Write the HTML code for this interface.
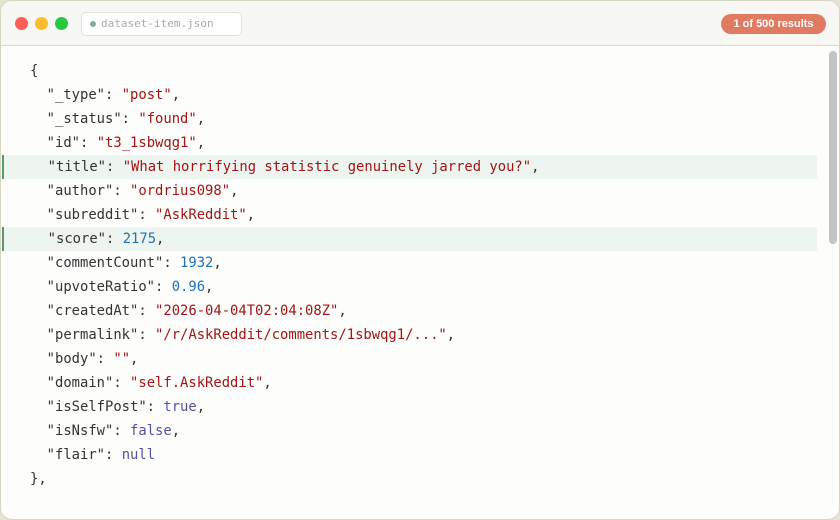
<!DOCTYPE html>
<html><head><style>
html,body{margin:0;padding:0;width:840px;height:520px;overflow:hidden;background:#e4e4d4;}
.win{position:absolute;left:0;top:0;width:838px;height:518px;border:1px solid #d6d6c2;border-radius:12px;background:#fdfdfc;overflow:hidden;}
.hdr{position:absolute;left:0;top:0;right:0;height:44px;background:#f7f7f3;border-bottom:1px solid #dcdccc;}
.dot{position:absolute;top:16px;width:13px;height:13px;border-radius:50%;}
.url{position:absolute;left:80px;top:11px;width:159px;height:22px;border:1px solid #e2e2d8;border-radius:5px;background:#fff;font:11px "DejaVu Sans Mono",monospace;color:#a8a8b0;line-height:22px;}
.url i{position:absolute;left:8px;top:8px;width:6px;height:6px;border-radius:50%;background:#7fae98;}
.badge{position:absolute;left:720px;top:13px;width:105px;height:20px;border-radius:10px;background:#e07a60;color:#fff;font:bold 11px "Liberation Sans",sans-serif;text-align:center;line-height:20px;}
.sb{position:absolute;left:828px;top:50px;width:8px;height:193px;border-radius:4px;background:#c4c4c4;}
.code{position:absolute;left:0;top:58px;width:816px;font:13.85px "DejaVu Sans Mono",monospace;color:#333;}
.l{height:24px;line-height:24px;padding-left:29px;white-space:pre;}
.h{background:#eef4ef;border-left:2px solid #5c9a6a;padding-left:27px;margin-left:1px;}
.s{color:#a31515}.n{color:#1f74b8}.b{color:#5252a0}
</style></head><body>
<div class="win">
<div class="hdr">
<div class="dot" style="left:14px;background:#fe5f57"></div>
<div class="dot" style="left:34px;background:#febc2e"></div>
<div class="dot" style="left:54px;background:#28c840"></div>
<div class="url"><i></i><span style="position:absolute;left:19px">dataset-item.json</span></div>
<div class="badge">1 of 500 results</div>
</div>
<div class="sb"></div>
<div class="code">
<div class="l">{</div>
<div class="l">  "_type": <span class="s">"post"</span>,</div>
<div class="l">  "_status": <span class="s">"found"</span>,</div>
<div class="l">  "id": <span class="s">"t3_1sbwqg1"</span>,</div>
<div class="l h">  "title": <span class="s">"What horrifying statistic genuinely jarred you?"</span>,</div>
<div class="l">  "author": <span class="s">"ordrius098"</span>,</div>
<div class="l">  "subreddit": <span class="s">"AskReddit"</span>,</div>
<div class="l h">  "score": <span class="n">2175</span>,</div>
<div class="l">  "commentCount": <span class="n">1932</span>,</div>
<div class="l">  "upvoteRatio": <span class="n">0.96</span>,</div>
<div class="l">  "createdAt": <span class="s">"2026-04-04T02:04:08Z"</span>,</div>
<div class="l">  "permalink": <span class="s">"/r/AskReddit/comments/1sbwqg1/..."</span>,</div>
<div class="l">  "body": <span class="s">""</span>,</div>
<div class="l">  "domain": <span class="s">"self.AskReddit"</span>,</div>
<div class="l">  "isSelfPost": <span class="b">true</span>,</div>
<div class="l">  "isNsfw": <span class="b">false</span>,</div>
<div class="l">  "flair": <span class="b">null</span></div>
<div class="l">},</div>
</div>
</div>
</body></html>
